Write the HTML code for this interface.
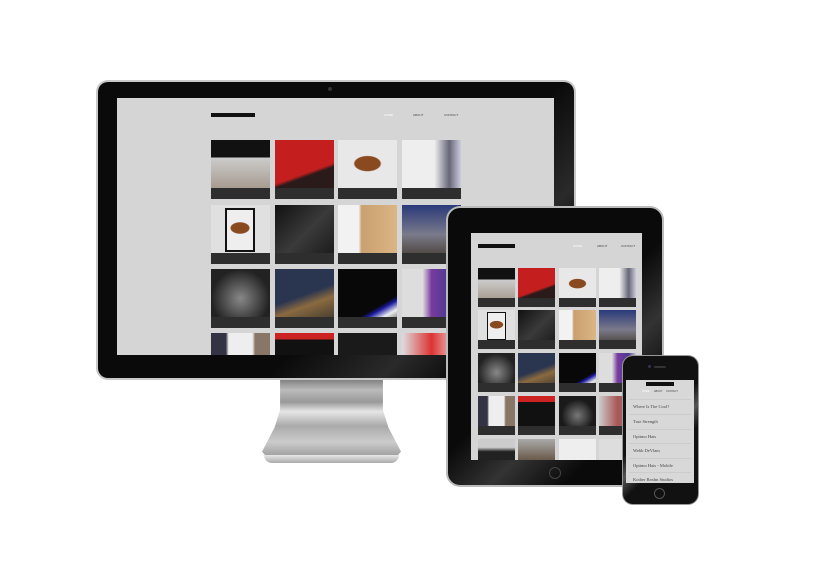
<!DOCTYPE html>
<html><head><meta charset="utf-8"><style>
*{margin:0;padding:0;box-sizing:border-box}
body{width:819px;height:561px;background:#fff;position:relative;overflow:hidden;font-family:"Liberation Sans",sans-serif}
.a{position:absolute}
.t{position:absolute;overflow:hidden}
.t i{position:absolute;left:0;right:0;bottom:0;background:#2e2e2e;display:block}
</style></head><body>

<!-- Monitor stand -->
<div class="a" style="left:262px;top:378px;width:139px;height:80px;background:linear-gradient(#777,#bbb 15%,#999 30%,#e6e6e6 42%,#aaa 60%,#ccc 80%,#999);clip-path:polygon(13% 0,87% 0,87% 40%,91% 62%,100% 92%,96% 100%,4% 100%,0 92%,9% 62%,13% 40%)"></div>
<div class="a" style="left:264px;top:455px;width:135px;height:8px;background:linear-gradient(#e8e8e8,#aaa);border-radius:0 0 8px 8px"></div>

<!-- Monitor -->
<div class="a" style="left:96px;top:80px;width:480px;height:300px;background:#c8c8c8;border-radius:12px"></div>
<div class="a" style="left:98px;top:82px;width:476px;height:296px;background:linear-gradient(135deg,#0a0a0a 60%,#2a2a2a 75%,#0a0a0a 85%);border-radius:10px"></div>
<div class="a" style="left:328px;top:87px;width:4px;height:4px;background:#333;border-radius:50%"></div>
<div class="a" style="left:117px;top:98px;width:437px;height:257px;background:#d5d5d5"></div>
<div class="a" style="left:211px;top:113px;width:44px;height:4px;background:#111"></div>
<div class="a" style="left:384px;top:113px;font-size:3px;color:#fff">HOME</div>
<div class="a" style="left:413px;top:113px;font-size:3px;color:#444">ABOUT</div>
<div class="a" style="left:444px;top:113px;font-size:3px;color:#444">CONTACT</div>

<div class="t" style="left:211px;top:140px;width:59px;height:59px;background:linear-gradient(#111 30%,#ccc 30%,#9a8a7a)"><i style="height:11px"></i></div>
<div class="t" style="left:275px;top:140px;width:59px;height:59px;background:linear-gradient(160deg,#c41e1e 55%,#2a1a1a 60%)"><i style="height:11px"></i></div>
<div class="t" style="left:338px;top:140px;width:59px;height:59px;background:radial-gradient(ellipse 14px 8px at 50% 40%,#8a4a20 90%,transparent 100%),#e8e8e8"><i style="height:11px"></i></div>
<div class="t" style="left:402px;top:140px;width:59px;height:59px;background:linear-gradient(90deg,#eee 55%,#667 80%,#ccd)"><i style="height:11px"></i></div>

<div class="t" style="left:211px;top:205px;width:59px;height:59px;background:#e0e0e0"><div class="a" style="left:14px;top:3px;width:30px;height:44px;border:2px solid #111;background:radial-gradient(ellipse 10px 6px at 50% 45%,#8a4a20 90%,#eee 100%)"></div><i style="height:11px"></i></div>
<div class="t" style="left:275px;top:205px;width:59px;height:59px;background:linear-gradient(135deg,#111,#3a3a3a 50%,#151515)"><i style="height:11px"></i></div>
<div class="t" style="left:338px;top:205px;width:59px;height:59px;background:linear-gradient(90deg,#f2f2f2 35%,#c9a070 40%,#dcb585)"><i style="height:11px"></i></div>
<div class="t" style="left:402px;top:205px;width:59px;height:59px;background:linear-gradient(#2a3a7a,#7a7a8a 50%,#3a3020)"><i style="height:11px"></i></div>

<div class="t" style="left:211px;top:269px;width:59px;height:59px;background:radial-gradient(circle at 50% 50%,#888,#222 70%)"><i style="height:11px"></i></div>
<div class="t" style="left:275px;top:269px;width:59px;height:59px;background:linear-gradient(160deg,#2a3550 45%,#8a6a40 60%,#2a2a2a)"><i style="height:11px"></i></div>
<div class="t" style="left:338px;top:269px;width:59px;height:59px;background:linear-gradient(150deg,#080808 65%,#1a1aa0 70%,#eee 80%,#111)"><i style="height:11px"></i></div>
<div class="t" style="left:402px;top:269px;width:59px;height:59px;background:linear-gradient(90deg,#ddd 35%,#7a3aa0 50%,#4a3a90 80%,#ccc)"><i style="height:11px"></i></div>

<div class="t" style="left:211px;top:333px;width:59px;height:22px;background:linear-gradient(90deg,#334 25%,#eee 30%,#eee 70%,#876 75%)"></div>
<div class="t" style="left:275px;top:333px;width:59px;height:22px;background:linear-gradient(#c22 30%,#111 30%)"></div>
<div class="t" style="left:338px;top:333px;width:59px;height:22px;background:#1a1a1a"></div>
<div class="t" style="left:402px;top:333px;width:59px;height:22px;background:linear-gradient(90deg,#ddd,#d33 50%,#eee)"></div>

<!-- Tablet -->
<div class="a" style="left:446px;top:206px;width:218px;height:281px;background:#bbb;border-radius:14px"></div>
<div class="a" style="left:448px;top:208px;width:214px;height:277px;background:linear-gradient(135deg,#0a0a0a 50%,#333 65%,#0a0a0a 80%);border-radius:12px"></div>
<div class="a" style="left:471px;top:233px;width:171px;height:227px;background:#d5d5d5"></div>
<div class="a" style="left:478px;top:244px;width:37px;height:4px;background:#111"></div>
<div class="a" style="left:573px;top:244px;font-size:3px;color:#fff">HOME</div>
<div class="a" style="left:597px;top:244px;font-size:3px;color:#444">ABOUT</div>
<div class="a" style="left:621px;top:244px;font-size:3px;color:#444">CONTACT</div>
<div class="a" style="left:549px;top:467px;width:12px;height:12px;border:1px solid #444;border-radius:50%"></div>

<div class="t" style="left:478px;top:268px;width:37px;height:39px;background:linear-gradient(#111 30%,#ccc 30%,#9a8a7a)"><i style="height:9px"></i></div>
<div class="t" style="left:518px;top:268px;width:37px;height:39px;background:linear-gradient(160deg,#c41e1e 55%,#2a1a1a 60%)"><i style="height:9px"></i></div>
<div class="t" style="left:559px;top:268px;width:37px;height:39px;background:radial-gradient(ellipse 9px 5px at 50% 40%,#8a4a20 90%,transparent 100%),#e8e8e8"><i style="height:9px"></i></div>
<div class="t" style="left:599px;top:268px;width:37px;height:39px;background:linear-gradient(90deg,#eee 55%,#667 80%,#ccd)"><i style="height:9px"></i></div>

<div class="t" style="left:478px;top:310px;width:37px;height:39px;background:#e0e0e0"><div class="a" style="left:9px;top:2px;width:19px;height:28px;border:1px solid #111;background:radial-gradient(ellipse 7px 4px at 50% 45%,#8a4a20 90%,#eee 100%)"></div><i style="height:9px"></i></div>
<div class="t" style="left:518px;top:310px;width:37px;height:39px;background:linear-gradient(135deg,#111,#3a3a3a 50%,#151515)"><i style="height:9px"></i></div>
<div class="t" style="left:559px;top:310px;width:37px;height:39px;background:linear-gradient(90deg,#f2f2f2 35%,#c9a070 40%,#dcb585)"><i style="height:9px"></i></div>
<div class="t" style="left:599px;top:310px;width:37px;height:39px;background:linear-gradient(#2a3a7a,#7a7a8a 50%,#3a3020)"><i style="height:9px"></i></div>

<div class="t" style="left:478px;top:353px;width:37px;height:39px;background:radial-gradient(circle at 50% 50%,#888,#222 70%)"><i style="height:9px"></i></div>
<div class="t" style="left:518px;top:353px;width:37px;height:39px;background:linear-gradient(160deg,#2a3550 45%,#8a6a40 60%,#2a2a2a)"><i style="height:9px"></i></div>
<div class="t" style="left:559px;top:353px;width:37px;height:39px;background:linear-gradient(150deg,#080808 65%,#1a1aa0 70%,#eee 80%,#111)"><i style="height:9px"></i></div>
<div class="t" style="left:599px;top:353px;width:37px;height:39px;background:linear-gradient(90deg,#ddd 35%,#7a3aa0 50%,#4a3a90 80%,#ccc)"><i style="height:9px"></i></div>

<div class="t" style="left:478px;top:396px;width:37px;height:39px;background:linear-gradient(90deg,#334 25%,#eee 30%,#eee 70%,#876 75%)"><i style="height:9px"></i></div>
<div class="t" style="left:518px;top:396px;width:37px;height:39px;background:linear-gradient(#c22 15%,#111 15%)"><i style="height:9px"></i></div>
<div class="t" style="left:559px;top:396px;width:37px;height:39px;background:radial-gradient(circle,#777,#1a1a1a 60%)"><i style="height:9px"></i></div>
<div class="t" style="left:599px;top:396px;width:37px;height:39px;background:linear-gradient(90deg,#ccc,#a55 50%,#888)"><i style="height:9px"></i></div>

<div class="t" style="left:478px;top:439px;width:37px;height:21px;background:linear-gradient(#ccc 40%,#222 60%)"></div>
<div class="t" style="left:518px;top:439px;width:37px;height:21px;background:linear-gradient(#aaa,#6a5a4a)"></div>
<div class="t" style="left:559px;top:439px;width:37px;height:21px;background:#eee"></div>
<div class="t" style="left:599px;top:439px;width:37px;height:21px;background:#ddd"></div>

<!-- Phone -->
<div class="a" style="left:622px;top:355px;width:77px;height:150px;background:#999;border-radius:11px"></div>
<div class="a" style="left:623px;top:356px;width:75px;height:148px;background:linear-gradient(135deg,#111 45%,#555 55%,#111 65%);border-radius:10px"></div>
<div class="a" style="left:648px;top:365px;width:3px;height:3px;background:#335;border-radius:50%"></div>
<div class="a" style="left:654px;top:366px;width:12px;height:2px;background:#333;border-radius:1px"></div>
<div class="a" style="left:626px;top:380px;width:68px;height:103px;background:#d8d8d8;overflow:hidden;font-family:'Liberation Serif',serif;color:#444">
 <div class="a" style="left:20px;top:2px;width:28px;height:4px;background:#111"></div>
 <div class="a" style="left:16px;top:10px;font-size:2.5px;font-family:'Liberation Sans',sans-serif;color:#fff">HOME</div>
 <div class="a" style="left:28px;top:10px;font-size:2.5px;font-family:'Liberation Sans',sans-serif">ABOUT</div>
 <div class="a" style="left:40px;top:10px;font-size:2.5px;font-family:'Liberation Sans',sans-serif">CONTACT</div>
 <div class="a" style="left:7px;top:24px;font-size:4.5px">Where Is The Cool?</div>
 <div class="a" style="left:7px;top:39px;font-size:4.5px">True Strength</div>
 <div class="a" style="left:7px;top:54px;font-size:4.5px">Optimo Hats</div>
 <div class="a" style="left:7px;top:68px;font-size:4.5px">Webb DeVlam</div>
 <div class="a" style="left:7px;top:83px;font-size:4.5px">Optimo Hats - Mobile</div>
 <div class="a" style="left:7px;top:97px;font-size:4.5px">Kother Realm Studios</div>
 <div class="a" style="left:3px;top:19px;width:62px;height:1px;background:#ccc"></div>
 <div class="a" style="left:3px;top:34px;width:62px;height:1px;background:#ccc"></div>
 <div class="a" style="left:3px;top:49px;width:62px;height:1px;background:#ccc"></div>
 <div class="a" style="left:3px;top:63px;width:62px;height:1px;background:#ccc"></div>
 <div class="a" style="left:3px;top:78px;width:62px;height:1px;background:#ccc"></div>
 <div class="a" style="left:3px;top:92px;width:62px;height:1px;background:#ccc"></div>
</div>
<div class="a" style="left:654px;top:488px;width:11px;height:11px;border:1px solid #555;border-radius:50%"></div>

</body></html>
